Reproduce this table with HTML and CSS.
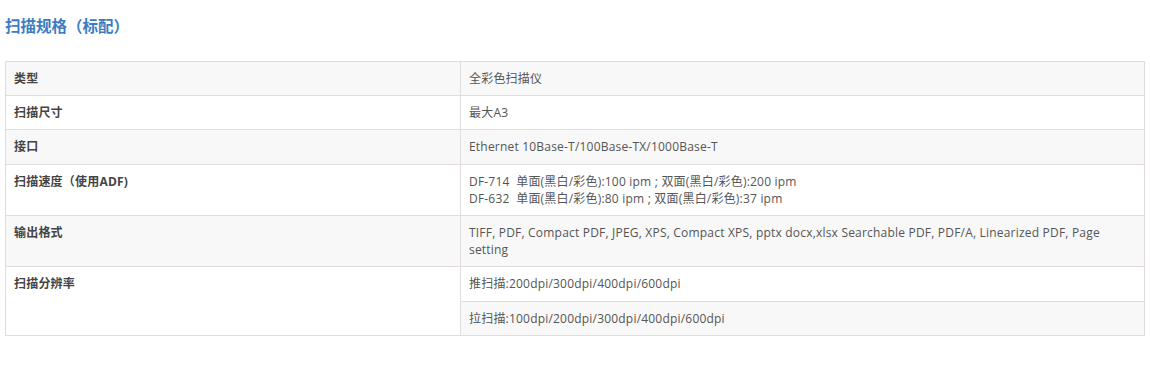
FILE: index.html
```html
<!DOCTYPE html>
<html lang="zh-CN">
<head>
<meta charset="utf-8">
<link rel="stylesheet" href="styles.css">
</head>
<body>
<div class="page">
  <h2 class="title">扫描规格（标配）</h2>
  <table class="spec">
    <colgroup><col class="c1"><col class="c2"></colgroup>
    <tr><th>类型</th><td>全彩色扫描仪</td></tr>
    <tr><th>扫描尺寸</th><td>最大A3</td></tr>
    <tr><th>接口</th><td>Ethernet 10Base-T/100Base-TX/1000Base-T</td></tr>
    <tr><th>扫描速度（使用ADF)</th><td>DF-714&nbsp; 单面(黑白/彩色):100 ipm ; 双面(黑白/彩色):200 ipm<br>DF-632&nbsp; 单面(黑白/彩色):80 ipm ; 双面(黑白/彩色):37 ipm</td></tr>
    <tr><th>输出格式</th><td>TIFF, PDF, Compact PDF, JPEG, XPS, Compact XPS, pptx docx,xlsx Searchable PDF, PDF/A, Linearized PDF, Page setting</td></tr>
    <tr><th rowspan="2">扫描分辨率</th><td>推扫描:200dpi/300dpi/400dpi/600dpi</td></tr>
    <tr><td>拉扫描:100dpi/200dpi/300dpi/400dpi/600dpi</td></tr>
  </table>
</div>
</body>
</html>
```
FILE: styles.css
```css
html, body { margin: 0; padding: 0; background: #fff; }
body { font-family: "Open Sans", "Noto Sans CJK SC", sans-serif; color: #555; }
.page { padding: 0 5px; }
.title {
  margin: 0;
  padding-top: 16px;
  height: 61px;
  box-sizing: border-box;
  font-size: 15.5px;
  line-height: 20px;
  font-weight: bold;
  color: #3c7cc3;
}
.spec {
  width: 1140px;
  border-collapse: collapse;
  table-layout: fixed;
  font-size: 12px;
  line-height: 17.2px;
  letter-spacing: 0.2px;
}
.c1 { width: 455px; }
.spec th, .spec td {
  border: 1px solid #e3dcdc;
  padding: 8px 8px;
  text-align: left;
  vertical-align: top;
  font-weight: normal;
}
.spec th { font-weight: bold; color: #444; }
.spec tr:nth-child(odd) th, .spec tr:nth-child(odd) td { background: #f8f8f8; }
```
